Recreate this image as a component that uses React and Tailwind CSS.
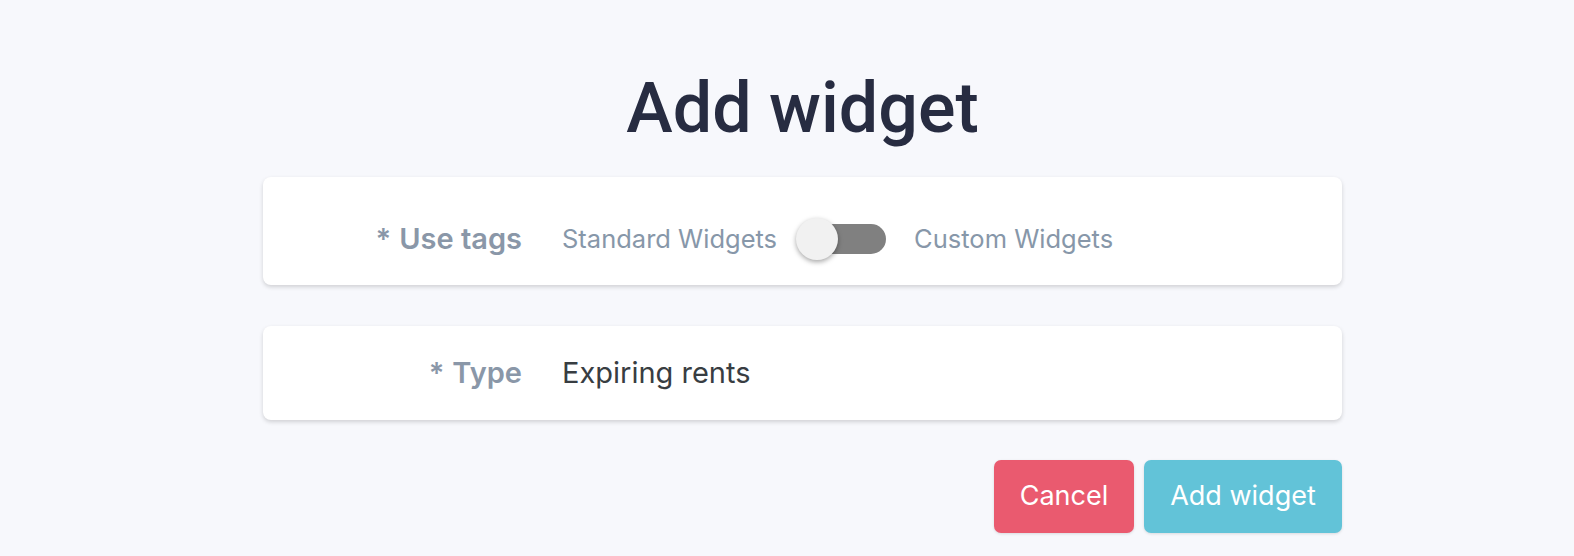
import React, { useState } from 'react';

function Toggle({ on, onChange }) {
  return (
    <button
      type="button"
      onClick={() => onChange(!on)}
      className="relative flex items-center w-[90px] h-[42px] focus:outline-none"
    >
      <span className="absolute left-[2px] right-0 top-[6px] h-[30px] rounded-full bg-[#808080]" />
      <span
        className={`absolute top-0 h-[42px] w-[42px] rounded-full bg-[#f1f1f1] shadow-[0_2px_5px_rgba(0,0,0,0.35)] ${
          on ? 'left-[48px]' : 'left-0'
        }`}
      />
    </button>
  );
}

function Row({ label, children, className }) {
  return (
    <div
      className={`flex items-center bg-white rounded-[8px] shadow-[0_2px_4px_rgba(0,0,0,0.16)] ${className}`}
    >
      <div className="w-[259px] text-right text-[29px] font-semibold text-[#8a97a8]">
        <span className="mr-[8px]">*</span>
        {label}
      </div>
      <div className="pl-[40px] flex items-center">{children}</div>
    </div>
  );
}

export default function App() {
  const [custom, setCustom] = useState(false);

  return (
    <div className="min-h-[556px] bg-[#f7f8fc] font-['Inter',sans-serif]">
      <div className="ml-[263px] w-[1079px] pt-[66px] flex flex-col">
        <h1 className="text-center text-[70px] leading-[84px] font-medium text-[#272c41] font-['Roboto',sans-serif]">
          Add widget
        </h1>

        <Row label="Use tags" className="mt-[27px] h-[108px] pt-[16px]">
          <span className="text-[25.5px] text-[#8797a9]">Standard Widgets</span>
          <div className="ml-[19px] mr-[28px]">
            <Toggle on={custom} onChange={setCustom} />
          </div>
          <span className="text-[25.5px] text-[#8797a9]">Custom Widgets</span>
        </Row>

        <Row label="Type" className="mt-[41px] h-[94px]">
          <span className="text-[29px] text-[#383d42]">Expiring rents</span>
        </Row>

        <div className="mt-[40px] flex justify-end gap-[10px]">
          <button className="w-[140px] h-[73px] rounded-[7px] bg-[#ea5a6f] text-white text-[27px] shadow-[0_1px_3px_rgba(0,0,0,0.12)]">
            Cancel
          </button>
          <button className="w-[198px] h-[73px] rounded-[7px] bg-[#62c3d8] text-white text-[27px] shadow-[0_1px_3px_rgba(0,0,0,0.12)]">
            Add widget
          </button>
        </div>
      </div>
    </div>
  );
}
